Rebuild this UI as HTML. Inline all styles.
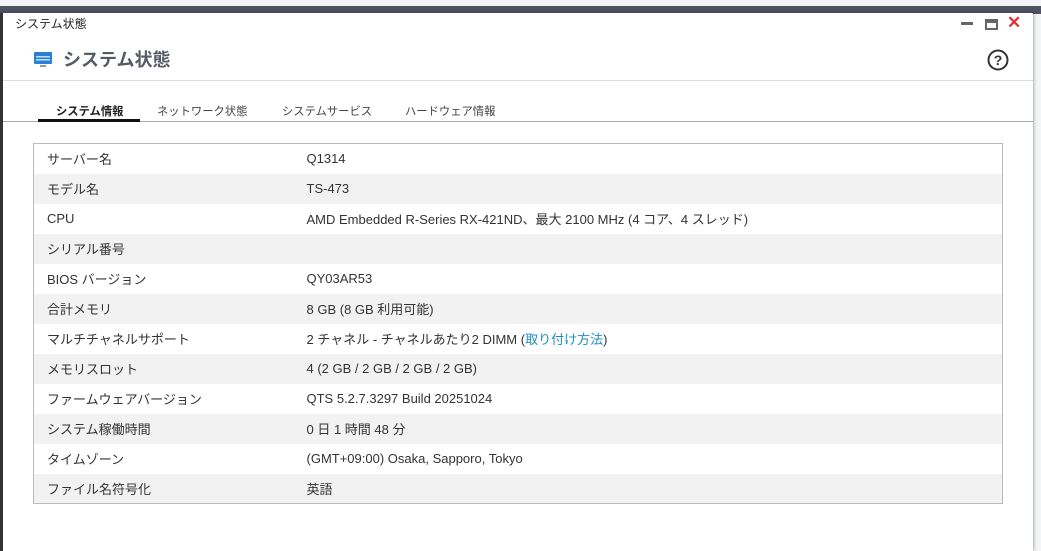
<!DOCTYPE html>
<html><head><meta charset="utf-8"><style>
*{margin:0;padding:0;box-sizing:border-box}
body{width:1041px;height:551px;overflow:hidden;background:#f4f5f7;font-family:"Liberation Sans","Noto Sans CJK JP",sans-serif;position:relative}
.top{position:absolute;left:0;top:0;width:1041px;height:6px;background:#f2f3f5}
.bar{position:absolute;left:0;top:6px;width:1041px;height:8px;background:#4f5263}
.win{position:absolute;left:0;top:13px;width:1033px;height:538px;background:#fff;border-left:3px solid #333;box-shadow:1px 0 3px rgba(0,0,0,.3)}
.t1{position:absolute;left:12px;top:2px;font-size:12px;color:#222}
.t2{position:absolute;left:60px;top:33px;font-size:18px;font-weight:bold;color:#555a63}
.sep{position:absolute;left:0;top:67px;width:1030px;height:1px;background:#ddd}
.tabs{position:absolute;left:0;top:90px;font-size:11.3px;color:#444}
.tabs span{position:absolute;white-space:nowrap}
.tl{position:absolute;left:0;top:108px;width:1030px;height:1px;background:#aaa}
.ul{position:absolute;left:35px;top:106px;width:102px;height:3px;background:#111}
table{position:absolute;left:30px;top:130px;width:970px;border:1px solid #bbb;border-collapse:collapse;font-size:13px;color:#333}
td{height:30px;padding:0 0 0 13px}
tr:nth-child(even){background:#f2f2f2}
td:first-child{width:260px}
a{color:#1a8fc7;text-decoration:none}
</style></head><body>
<div class="top"></div><div class="bar"></div>
<div class="win">
<div class="t1">システム状態</div>
<div style="position:absolute;left:958px;top:9px;width:12px;height:3px;background:#666"></div>
<div style="position:absolute;left:982px;top:6px;width:13px;height:11px;border:2px solid #666;border-top-width:4px"></div>
<div style="position:absolute;left:1004px;top:0px;font-size:17px;color:#d33;font-weight:bold">✕</div>
<svg style="position:absolute;left:30px;top:38px" width="20" height="18" viewBox="0 0 20 18"><rect x="1" y="1" width="18" height="12" rx="1" fill="#2b7fd6"/><rect x="3" y="5" width="14" height="1.5" fill="#bfe0ff"/><rect x="3" y="8" width="14" height="1.5" fill="#bfe0ff"/><rect x="7" y="14" width="6" height="2" fill="#999"/></svg>
<div class="t2">システム状態</div>
<svg style="position:absolute;left:984px;top:36px" width="22" height="22" viewBox="0 0 22 22"><circle cx="11" cy="11" r="9.5" fill="none" stroke="#333" stroke-width="2"/><text x="11" y="16" text-anchor="middle" font-size="14" font-weight="bold" fill="#333" font-family="Liberation Sans">?</text></svg>
<div class="sep"></div>
<div class="tabs"><span style="left:53px;font-weight:bold;color:#222">システム情報</span><span style="left:154px">ネットワーク状態</span><span style="left:279px">システムサービス</span><span style="left:402px">ハードウェア情報</span></div>
<div class="tl"></div><div class="ul"></div>
<table>
<tr><td>サーバー名</td><td>Q1314</td></tr>
<tr><td>モデル名</td><td>TS-473</td></tr>
<tr><td>CPU</td><td>AMD Embedded R-Series RX-421ND、最大 2100 MHz (4 コア、4 スレッド)</td></tr>
<tr><td>シリアル番号</td><td></td></tr>
<tr><td>BIOS バージョン</td><td>QY03AR53</td></tr>
<tr><td>合計メモリ</td><td>8 GB (8 GB 利用可能)</td></tr>
<tr><td>マルチチャネルサポート</td><td>2 チャネル - チャネルあたり2 DIMM (<a>取り付け方法</a>)</td></tr>
<tr><td>メモリスロット</td><td>4 (2 GB / 2 GB / 2 GB / 2 GB)</td></tr>
<tr><td>ファームウェアバージョン</td><td>QTS 5.2.7.3297 Build 20251024</td></tr>
<tr><td>システム稼働時間</td><td>0 日 1 時間 48 分</td></tr>
<tr><td>タイムゾーン</td><td>(GMT+09:00) Osaka, Sapporo, Tokyo</td></tr>
<tr><td>ファイル名符号化</td><td>英語</td></tr>
</table>
</div>
</body></html>
